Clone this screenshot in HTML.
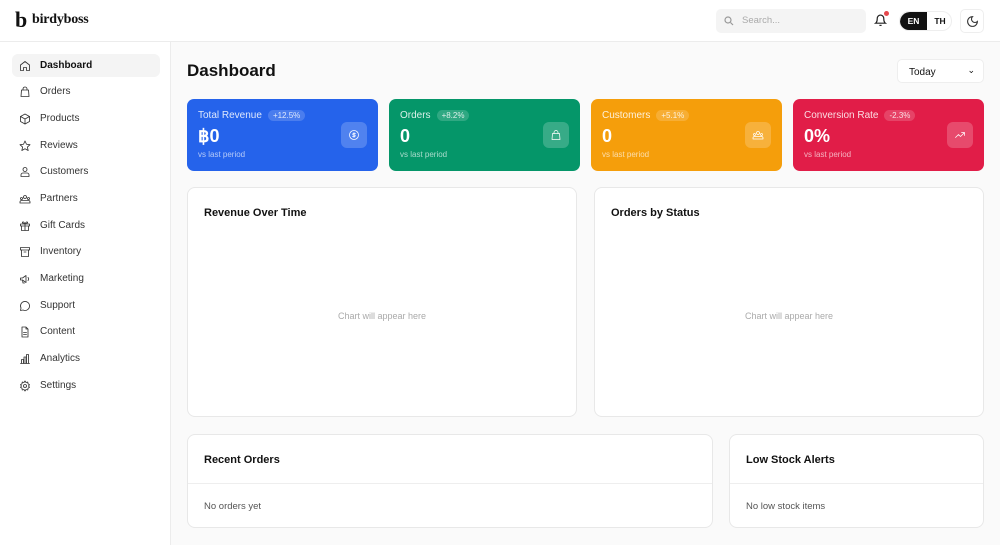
<!DOCTYPE html>
<html><head><meta charset="utf-8"><style>
*{box-sizing:border-box;margin:0;padding:0}
body{width:1000px;height:545px;overflow:hidden;font-family:"Liberation Sans",sans-serif;background:#fafafa;color:#111;position:relative}
.hdr{position:absolute;left:0;top:0;width:1000px;height:42px;background:#fff;border-bottom:1px solid #ececec}
.side{position:absolute;left:0;top:42px;width:171px;height:503px;background:#fff;border-right:1px solid #ececec}
.nav{position:absolute;left:12px;width:148px;height:23px;font-size:10px;color:#333;border-radius:6px}
.nav svg{position:absolute;left:7px;top:5.5px;width:12px;height:12px;fill:none;stroke:#333;stroke-width:1.7;stroke-linecap:round;stroke-linejoin:round}
.nav span{position:absolute;left:28px;top:5px;line-height:13px}
.nav.act{background:#f4f4f4;color:#111;font-weight:bold}
.card{position:absolute;border-radius:7px;color:#fff}
.card .t{position:absolute;left:11px;top:11px;font-size:10px;opacity:.85}
.card .b{display:inline-block;margin-left:6px;padding:1px 5px;border-radius:7px;background:rgba(255,255,255,.2);font-size:8px}
.card .v{position:absolute;left:11px;top:27px;font-size:18px;font-weight:bold}
.card .s{position:absolute;left:11px;top:51px;font-size:8px;opacity:.65}
.card .i{position:absolute;right:11px;top:23px;width:26px;height:26px;border-radius:6px;background:rgba(255,255,255,.2);display:flex;align-items:center;justify-content:center}
.card .i svg{width:12px;height:12px;fill:none;stroke:#fff;stroke-width:1.5;stroke-linecap:round;stroke-linejoin:round}
.box{position:absolute;background:#fff;border:1px solid #e8e8e8;border-radius:8px}
.box h3{position:absolute;left:16px;font-size:11px;font-weight:bold}
.ph{position:absolute;width:100%;text-align:center;font-size:9px;color:#aaa}
</style></head><body>
<div class="hdr">
 <div style="position:absolute;left:15px;top:9px;font-family:'Liberation Serif',serif;font-size:22px;font-weight:bold;line-height:22px">b</div>
 <div style="position:absolute;left:32px;top:12px;font-family:'Liberation Serif',serif;font-size:14px;font-weight:bold;letter-spacing:-.2px">birdyboss</div>
 <div style="position:absolute;left:716px;top:9px;width:150px;height:24px;background:#f4f4f4;border-radius:5px">
  <svg style="position:absolute;left:8px;top:7px" width="10" height="10" viewBox="0 0 10 10" fill="none" stroke="#999" stroke-width="1.2"><circle cx="4" cy="4" r="3"/><path d="M6.5 6.5 9 9"/></svg>
  <span style="position:absolute;left:26px;top:6px;font-size:9.5px;color:#aaa">Search...</span></div>
 <svg style="position:absolute;left:874px;top:14px" width="13" height="13" viewBox="0 0 24 24" fill="none" stroke="#222" stroke-width="2.2"><path d="M6 8a6 6 0 0 1 12 0c0 7 3 9 3 9H3s3-2 3-9"/><path d="M10 21h4"/></svg>
 <div style="position:absolute;left:884px;top:11px;width:5px;height:5px;border-radius:50%;background:#e5484d"></div>
 <div style="position:absolute;left:899px;top:11px;width:53px;height:20px;border-radius:10px;border:1px solid #eee;overflow:hidden;font-size:8.5px;font-weight:bold">
  <div style="position:absolute;left:0;top:0;width:27px;height:20px;background:#111;color:#fff;border-radius:10px 0 0 10px;text-align:center;line-height:19px">EN</div>
  <div style="position:absolute;left:27px;top:0;width:26px;text-align:center;line-height:19px">TH</div></div>
 <div style="position:absolute;left:960px;top:9px;width:24px;height:24px;border:1px solid #eee;border-radius:5px">
  <svg style="position:absolute;left:5px;top:5px" width="13" height="13" viewBox="0 0 24 24" fill="none" stroke="#333" stroke-width="2"><path d="M12 3a6 6 0 0 0 9 9 9 9 0 1 1-9-9z"/></svg></div>
</div>
<div class="side">
 <div class="nav act" style="top:12px"><svg viewBox="0 0 24 24"><path d="M3 10l9-7 9 7v11h-6v-6H9v6H3z"/></svg><span>Dashboard</span></div>
 <div class="nav" style="top:38px"><svg viewBox="0 0 24 24"><path d="M5 8h14l1 13H4z"/><path d="M8 8V6a4 4 0 0 1 8 0v2"/></svg><span>Orders</span></div>
 <div class="nav" style="top:65px"><svg viewBox="0 0 24 24"><path d="M12 2l9 5v10l-9 5-9-5V7z"/><path d="M3 7l9 5 9-5M12 12v10"/></svg><span>Products</span></div>
 <div class="nav" style="top:92px"><svg viewBox="0 0 24 24"><path d="M12 2l3 6.5 7 .8-5.2 4.8 1.5 7-6.3-3.6-6.3 3.6 1.5-7L2 9.3l7-.8z"/></svg><span>Reviews</span></div>
 <div class="nav" style="top:118px"><svg viewBox="0 0 24 24"><circle cx="12" cy="7" r="4"/><path d="M4 21v-3a4 4 0 0 1 4-4h8a4 4 0 0 1 4 4v3z"/></svg><span>Customers</span></div>
 <div class="nav" style="top:145px"><svg viewBox="0 0 24 24"><circle cx="12" cy="8" r="3"/><circle cx="5" cy="11" r="2"/><circle cx="19" cy="11" r="2"/><path d="M2 20v-2a3 3 0 0 1 3-3h14a3 3 0 0 1 3 3v2z"/></svg><span>Partners</span></div>
 <div class="nav" style="top:172px"><svg viewBox="0 0 24 24"><rect x="3" y="8" width="18" height="4"/><path d="M5 12v9h14v-9M12 8v13M12 8S10 3 7.5 4 9 8 12 8zm0 0s2-5 4.5-4S15 8 12 8"/></svg><span>Gift Cards</span></div>
 <div class="nav" style="top:198px"><svg viewBox="0 0 24 24"><rect x="3" y="3" width="18" height="5"/><path d="M5 8v13h14V8M10 12h4"/></svg><span>Inventory</span></div>
 <div class="nav" style="top:225px"><svg viewBox="0 0 24 24"><path d="M3 10v4h4l7 5V5L7 10zM18 9a4 4 0 0 1 0 6M7 14l1 6h3"/></svg><span>Marketing</span></div>
 <div class="nav" style="top:252px"><svg viewBox="0 0 24 24"><path d="M21 12a9 9 0 0 1-13 8l-5 1 1-5a9 9 0 1 1 17-4z"/></svg><span>Support</span></div>
 <div class="nav" style="top:278px"><svg viewBox="0 0 24 24"><path d="M14 2H6v20h12V6zM14 2v4h4M9 13h6M9 17h6"/></svg><span>Content</span></div>
 <div class="nav" style="top:305px"><svg viewBox="0 0 24 24"><path d="M3 21h18M5 21v-8h4v8M10 21V8h4v13M15 21V3h4v18"/></svg><span>Analytics</span></div>
 <div class="nav" style="top:332px"><svg viewBox="0 0 24 24"><circle cx="12" cy="12" r="3"/><path d="M12 2l2 3 3.5-1 .5 3.5 3 2-2 2.5 2 2.5-3 2-.5 3.5-3.5-1-2 3-2-3-3.5 1-.5-3.5-3-2 2-2.5-2-2.5 3-2L6.5 4 10 5z"/></svg><span>Settings</span></div>
</div>
<div style="position:absolute;left:187px;top:61px;font-size:17px;font-weight:bold">Dashboard</div>
<div style="position:absolute;left:897px;top:59px;width:87px;height:24px;background:#fff;border:1px solid #eee;border-radius:5px;font-size:10px;padding:7px 0 0 11px">Today<span style="position:absolute;right:8px;top:5px;font-size:9px">⌄</span></div>

<div class="card" style="left:187px;top:99px;width:191px;height:72px;background:#2563eb"><div class="t">Total Revenue<span class="b">+12.5%</span></div><div class="v">฿0</div><div class="s">vs last period</div><div class="i"><svg viewBox="0 0 24 24"><circle cx="12" cy="12" r="9"/><path d="M15 9h-4a1.5 1.5 0 0 0 0 3h2a1.5 1.5 0 0 1 0 3H9M12 7v10"/></svg></div></div>
<div class="card" style="left:389px;top:99px;width:191px;height:72px;background:#059669"><div class="t">Orders<span class="b">+8.2%</span></div><div class="v">0</div><div class="s">vs last period</div><div class="i"><svg viewBox="0 0 24 24"><path d="M5 9h14l1 12H4z"/><path d="M8 9V7a4 4 0 0 1 8 0v2"/></svg></div></div>
<div class="card" style="left:591px;top:99px;width:191px;height:72px;background:#f59e0b"><div class="t">Customers<span class="b">+5.1%</span></div><div class="v">0</div><div class="s">vs last period</div><div class="i"><svg viewBox="0 0 24 24"><circle cx="12" cy="8" r="3"/><circle cx="5" cy="11" r="2"/><circle cx="19" cy="11" r="2"/><path d="M2 20v-2a3 3 0 0 1 3-3h14a3 3 0 0 1 3 3v2z"/></svg></div></div>
<div class="card" style="left:793px;top:99px;width:191px;height:72px;background:#e11d48"><div class="t">Conversion Rate<span class="b">-2.3%</span></div><div class="v">0%</div><div class="s">vs last period</div><div class="i"><svg viewBox="0 0 24 24"><path d="M3 17l6-6 4 4 8-8M15 7h6v6"/></svg></div></div>

<div class="box" style="left:187px;top:187px;width:390px;height:230px"><h3 style="top:19px">Revenue Over Time</h3><div class="ph" style="top:123px">Chart will appear here</div></div>
<div class="box" style="left:594px;top:187px;width:390px;height:230px"><h3 style="top:19px">Orders by Status</h3><div class="ph" style="top:123px">Chart will appear here</div></div>
<div class="box" style="left:187px;top:434px;width:526px;height:94px"><h3 style="top:19px">Recent Orders</h3><div style="position:absolute;left:0;right:0;top:48px;border-top:1px solid #eee"></div><div style="position:absolute;left:16px;top:66px;font-size:9.5px;color:#555">No orders yet</div></div>
<div class="box" style="left:729px;top:434px;width:255px;height:94px"><h3 style="top:19px">Low Stock Alerts</h3><div style="position:absolute;left:0;right:0;top:48px;border-top:1px solid #eee"></div><div style="position:absolute;left:16px;top:66px;font-size:9.5px;color:#555">No low stock items</div></div>
</body></html>
